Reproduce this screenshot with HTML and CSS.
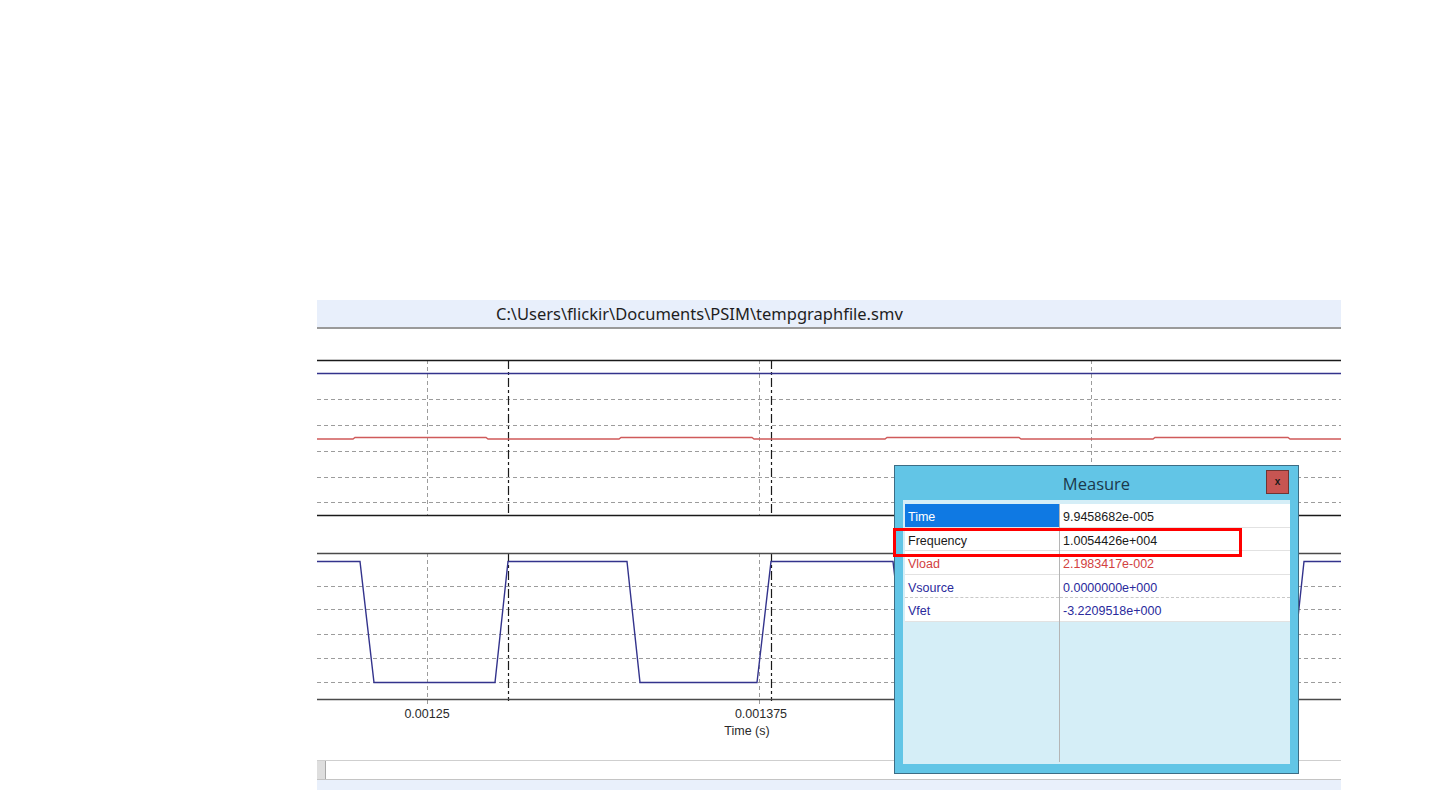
FILE: index.html
```html
<!DOCTYPE html>
<html>
<head>
<meta charset="utf-8">
<link rel="stylesheet" href="styles.css">
</head>
<body>
<div class="stage">
  <div class="window">
    <div class="titlebar">C:\Users\flickir\Documents\PSIM\tempgraphfile.smv</div>
    <svg class="plot" width="1024" height="431" viewBox="0 0 1024 431">
      <g class="grid">
        <line x1="0" x2="1024" y1="70.5" y2="70.5"/>
        <line x1="0" x2="1024" y1="96.5" y2="96.5"/>
        <line x1="0" x2="1024" y1="122.5" y2="122.5"/>
        <line x1="0" x2="1024" y1="148.5" y2="148.5"/>
        <line x1="0" x2="1024" y1="173.5" y2="173.5"/>
        <line x1="0" x2="1024" y1="257.5" y2="257.5"/>
        <line x1="0" x2="1024" y1="280.5" y2="280.5"/>
        <line x1="0" x2="1024" y1="305.5" y2="305.5"/>
        <line x1="0" x2="1024" y1="329.5" y2="329.5"/>
        <line x1="0" x2="1024" y1="353.5" y2="353.5"/>
        <line x1="110.5" x2="110.5" y1="31" y2="186"/>
        <line x1="442.5" x2="442.5" y1="31" y2="186"/>
        <line x1="774.5" x2="774.5" y1="31" y2="186"/>
        <line x1="110.5" x2="110.5" y1="224" y2="376"/>
        <line x1="442.5" x2="442.5" y1="224" y2="376"/>
        <line x1="774.5" x2="774.5" y1="224" y2="376"/>
      </g>
      <g class="cursor">
        <line x1="191.5" x2="191.5" y1="31" y2="186"/>
        <line x1="454.5" x2="454.5" y1="31" y2="186"/>
        <line x1="191.5" x2="191.5" y1="224" y2="372"/>
        <line x1="454.5" x2="454.5" y1="224" y2="372"/>
      </g>
      <line class="frame" x1="0" x2="1024" y1="31.5" y2="31.5"/>
      <line class="frame" x1="0" x2="1024" y1="186.5" y2="186.5"/>
      <line class="frame2" x1="0" x2="1024" y1="224.5" y2="224.5"/>
      <line class="frame2" x1="0" x2="1024" y1="370.5" y2="370.5"/>
      <line class="trace-blue" x1="0" x2="1024" y1="44.5" y2="44.5"/>
      <polyline class="trace-red" points="0,110 36,110 38,108.5 169,108.5 171,110 302,110 304,108.5 435,108.5 437,110 568,110 570,108.5 702,108.5 704,110 836,110 838,108.5 971,108.5 973,110 1024,110"/>
      <polyline class="trace-blue" points="0,232.5 43,232.5 57,353.5 178,353.5 191,232.5 310,232.5 323,353.5 440,353.5 454,232.5 576,232.5 590,353.5 706,353.5 720,232.5 842,232.5 856,353.5 974,353.5 987,232.5 1024,232.5"/>
      <text class="axis" x="110" y="389">0.00125</text>
      <text class="axis" x="444" y="389">0.001375</text>
      <text class="axis" x="430" y="406">Time (s)</text>
    </svg>
    <div class="scrollbar"><div class="thumb"></div></div>
    <div class="statusstrip"></div>
  </div>

  <div class="measure">
    <div class="m-title">
      <span>Measure</span>
      <div class="m-close">x</div>
    </div>
    <div class="m-panel">
      <div class="m-col m-names">
        <div class="m-row sel">Time</div>
        <div class="m-row black">Frequency</div>
        <div class="m-row red">Vload</div>
        <div class="m-row blue dashed">Vsource</div>
        <div class="m-row blue">Vfet</div>
      </div>
      <div class="m-col m-values">
        <div class="m-row black">9.9458682e-005</div>
        <div class="m-row black">1.0054426e+004</div>
        <div class="m-row red">2.1983417e-002</div>
        <div class="m-row blue dashed">0.0000000e+000</div>
        <div class="m-row blue">-3.2209518e+000</div>
      </div>
    </div>
  </div>
  <div class="highlight"></div>
</div>
</body>
</html>
```

FILE: styles.css
```css
html, body {
  margin: 0;
  padding: 0;
  background: #ffffff;
}
.stage {
  position: relative;
  width: 1440px;
  height: 810px;
  overflow: hidden;
  padding-top: 300px;
  padding-left: 317px;
  box-sizing: border-box;
}
.window {
  width: 1024px;
  display: flex;
  flex-direction: column;
}
.titlebar {
  height: 27px;
  background: #e8effb;
  border-bottom: 2px solid #9a9a9a;
  box-sizing: content-box;
  padding-left: 179px;
  font-family: "Noto Sans", "Open Sans", sans-serif;
  font-size: 16.5px;
  line-height: 27px;
  color: #1e1e1e;
  white-space: nowrap;
}
.plot {
  display: block;
  background: #ffffff;
}
.grid line {
  stroke: #9c9c9c;
  stroke-width: 1;
  stroke-dasharray: 4 3;
}
.cursor line {
  stroke: #1a1a1a;
  stroke-width: 1.2;
  stroke-dasharray: 9 3 3 3;
}
.frame {
  stroke: #1a1a1a;
  stroke-width: 1.5;
}
.frame2 {
  stroke: #4a4a4a;
  stroke-width: 1.5;
}
.trace-blue {
  fill: none;
  stroke: #33338c;
  stroke-width: 1.4;
}
.trace-red {
  fill: none;
  stroke: #cf5a5a;
  stroke-width: 1.4;
}
.axis {
  font-family: "Liberation Sans", Arial, sans-serif;
  font-size: 12.5px;
  fill: #2a2a2a;
  text-anchor: middle;
}
.scrollbar {
  height: 18px;
  border-top: 1px solid #cfcfcf;
  border-bottom: 1px solid #c4c4c4;
  background: #ffffff;
  display: flex;
}
.thumb {
  width: 8px;
  background: #dedede;
  border-right: 1px solid #a8a8a8;
}
.statusstrip {
  height: 10px;
  background: #e9f0fb;
}

/* Measure dialog (floating window) */
.measure {
  position: absolute;
  left: 894px;
  top: 465px;
  width: 405px;
  height: 309px;
  box-sizing: border-box;
  border: 1px solid #3d6d85;
  background: #62c5e6;
  display: flex;
  flex-direction: column;
  padding: 0 8px 9px 8px;
}
.m-title {
  position: relative;
  height: 34px;
  display: flex;
  align-items: center;
  justify-content: center;
  font-family: "Open Sans", "Noto Sans", sans-serif;
  font-size: 16.5px;
  color: #1b394b;
}
.m-close {
  position: absolute;
  right: 1px;
  top: 4px;
  width: 21px;
  height: 22px;
  background: #c75552;
  border: 1px solid #6e3533;
  font-family: "Liberation Sans", Arial, sans-serif;
  font-size: 10px;
  font-weight: bold;
  line-height: 21px;
  text-align: center;
  color: #1a1a1a;
}
.m-panel {
  flex: 1;
  background: #d5eef7;
  display: flex;
  padding: 4px 0 2px 2px;
}
.m-col {
  display: flex;
  flex-direction: column;
}
.m-names {
  width: 154px;
  border-right: 1px solid #b5b5b5;
}
.m-values {
  flex: 1;
}
.m-row {
  height: 19.5px;
  padding-top: 3px;
  border-bottom: 1px solid #e2e2e2;
  background: #ffffff;
  font-family: "Liberation Sans", Arial, sans-serif;
  font-size: 12.5px;
  line-height: 21px;
  padding-left: 3px;
  white-space: nowrap;
}
.m-row.dashed {
  border-bottom: 1px dashed #c8c8c8;
}
.m-row.sel {
  background: #0f79e3;
  color: #ffffff;
}
.black { color: #1a1a1a; }
.red { color: #d2413f; }
.blue { color: #2a2a9c; }

.highlight {
  position: absolute;
  left: 893px;
  top: 528px;
  width: 343px;
  height: 23px;
  border: 3px solid #ff0000;
}
```
